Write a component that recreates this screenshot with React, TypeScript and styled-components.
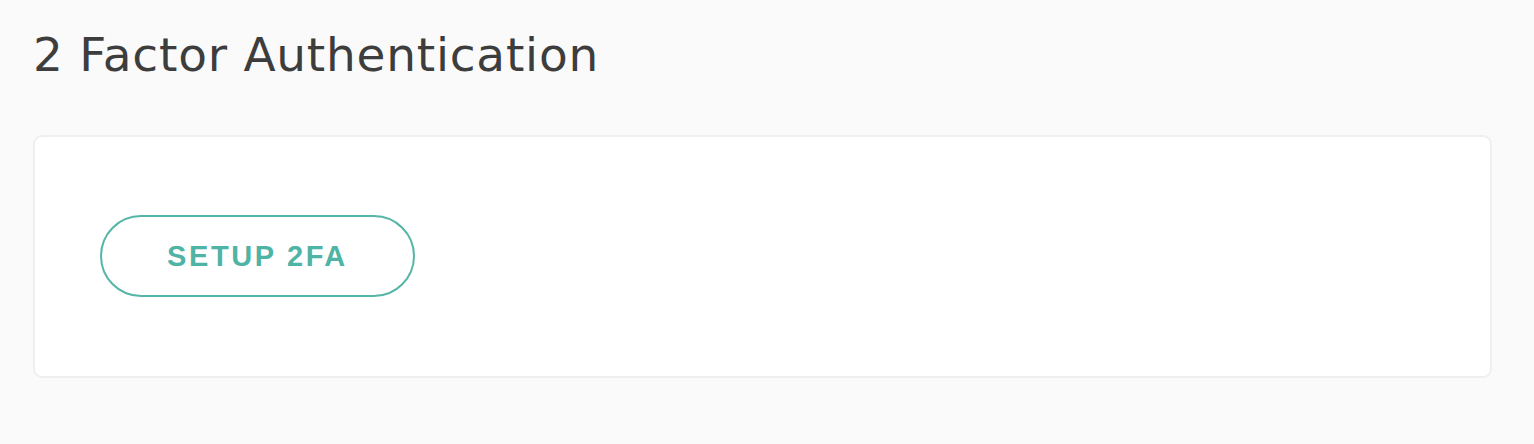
import React from 'react';
import styled, { createGlobalStyle } from 'styled-components';

const GlobalStyle = createGlobalStyle`
  body {
    margin: 0;
    background: #fafafa;
    font-family: "DejaVu Sans", "Liberation Sans", sans-serif;
  }
`;

const Page = styled.div`
  padding: 31px 42px 66px 33px;
`;

const Title = styled.h2`
  margin: 0 0 57px;
  font-family: "DejaVu Sans", sans-serif;
  font-size: 47px;
  line-height: 47px;
  font-weight: 400;
  letter-spacing: 0.75px;
  color: #3d3d3d;
`;

const Card = styled.div`
  display: flex;
  align-items: center;
  background: #fff;
  border: 2px solid #efefef;
  border-radius: 9px;
  padding: 78px 65px 79px;
`;

const OutlineButton = styled.button`
  width: 315px;
  height: 82px;
  border: 2px solid #55b5a7;
  border-radius: 41px;
  background: transparent;
  color: #4fb3a5;
  font-family: "Liberation Sans", Arial, sans-serif;
  font-size: 29px;
  font-weight: 700;
  letter-spacing: 2.6px;
  cursor: pointer;
`;

export default function App() {
  return (
    <>
      <GlobalStyle />
      <Page>
        <Title>2 Factor Authentication</Title>
        <Card>
          <OutlineButton>SETUP 2FA</OutlineButton>
        </Card>
      </Page>
    </>
  );
}
